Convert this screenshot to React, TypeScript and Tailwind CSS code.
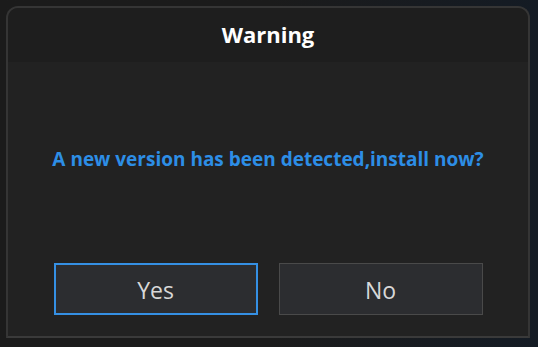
export default function App() {
  return (
    <div
      className="w-[538px] h-[347px] overflow-hidden bg-gradient-to-r from-[#1b1b1b] via-[#1b1b1b] to-[#141b24] pt-[6px] pl-[6px]"
      style={{ fontFamily: '"Open Sans", "Noto Sans", sans-serif' }}
    >
      <div className="w-[524px] h-[332px] flex flex-col rounded-t-[12px] border-2 border-[#353535] border-b-[#3a3a3a] bg-[#222222] overflow-hidden">
        <div className="h-[54px] shrink-0 flex items-center justify-center pb-[1px] bg-[#1e1e1e] text-white font-bold text-[22px]">
          Warning
        </div>
        <div className="flex-1 flex flex-col">
          <div className="h-[146px] flex items-end justify-center pb-[36px] text-[#2d8ee6] font-bold text-[19px] leading-[26px]">
            A new version has been detected,install now?
          </div>
          <div className="flex justify-center gap-[21px] pt-[55px]">
            <button className="w-[204px] h-[52px] border-2 border-[#3590e4] bg-[#2c2d30] text-[#d8d8d8] text-[23px] pt-[3px] flex items-center justify-center">
              Yes
            </button>
            <button className="w-[204px] h-[52px] border border-[#4a4a4a] bg-[#2c2d30] text-[#d8d8d8] text-[23px] pt-[3px] flex items-center justify-center">
              No
            </button>
          </div>
        </div>
      </div>
    </div>
  );
}
